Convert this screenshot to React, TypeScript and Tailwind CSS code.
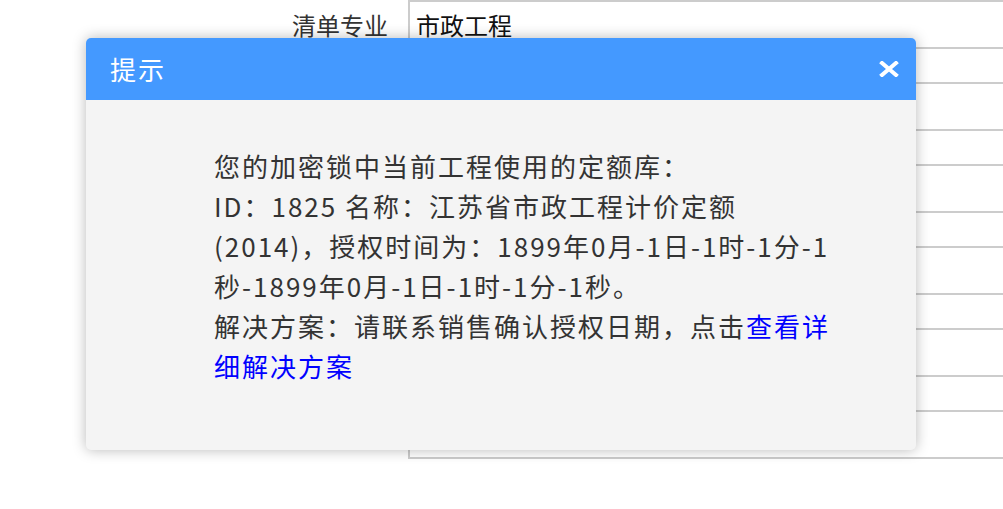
import React from 'react';

const FONT = '"Microsoft YaHei", "Noto Sans CJK SC", "Noto Sans", sans-serif';

// 背景表单行
const rows = [
  { label: '清单专业', value: '市政工程' },
  { label: '', value: '' },
  { label: '', value: '' },
  { label: '', value: '' },
  { label: '', value: '' },
  { label: '', value: '' },
];

const App = () => {
  return (
    <div className="relative w-[1003px] h-[509px] overflow-hidden bg-white" style={{ fontFamily: FONT }}>
      {/* 表单 */}
      <div className="flex flex-col gap-[33px]">
        {rows.map((row, i) => (
          <div key={i} className="flex items-center">
            <div className="w-[388px] shrink-0 text-right text-[24px] text-[#333] leading-none">{row.label}</div>
            <div className="ml-[20px] shrink-0 h-[49px] w-[700px] border-2 border-[#cccccc] bg-white flex items-center pl-[6px] text-[24px] text-[#111] leading-none">
              {row.value}
            </div>
          </div>
        ))}
      </div>

      {/* 提示弹窗 */}
      <div className="absolute left-[86px] top-[38px] w-[830px] h-[412px] rounded-[5px] bg-[#f4f4f4] shadow-[0_0_14px_rgba(0,0,0,0.28)] overflow-hidden flex flex-col">
        <div className="h-[62px] bg-[#4499ff] flex items-center justify-between pl-[24px] pr-[17px]">
          <span className="text-white text-[26px] tracking-[2px] leading-none">提示</span>
          <svg width="20" height="16" viewBox="0 0 20 16">
            <path d="M3 2 L17 14 M17 2 L3 14" stroke="#fff" strokeWidth="4" strokeLinecap="square" />
          </svg>
        </div>
        <div className="pl-[128px] pt-[46px] text-[26px] leading-[40px] tracking-[2px] text-[#333] whitespace-nowrap">
          <div>您的加密锁中当前工程使用的定额库：</div>
          <div>ID：1825 名称：江苏省市政工程计价定额</div>
          <div>(2014)，授权时间为：1899年0月-1日-1时-1分-1</div>
          <div>秒-1899年0月-1日-1时-1分-1秒。</div>
          <div>
            解决方案：请联系销售确认授权日期，点击<a className="text-[#0000ff]">查看详</a>
          </div>
          <div>
            <a className="text-[#0000ff]">细解决方案</a>
          </div>
        </div>
      </div>
    </div>
  );
};

export default App;
